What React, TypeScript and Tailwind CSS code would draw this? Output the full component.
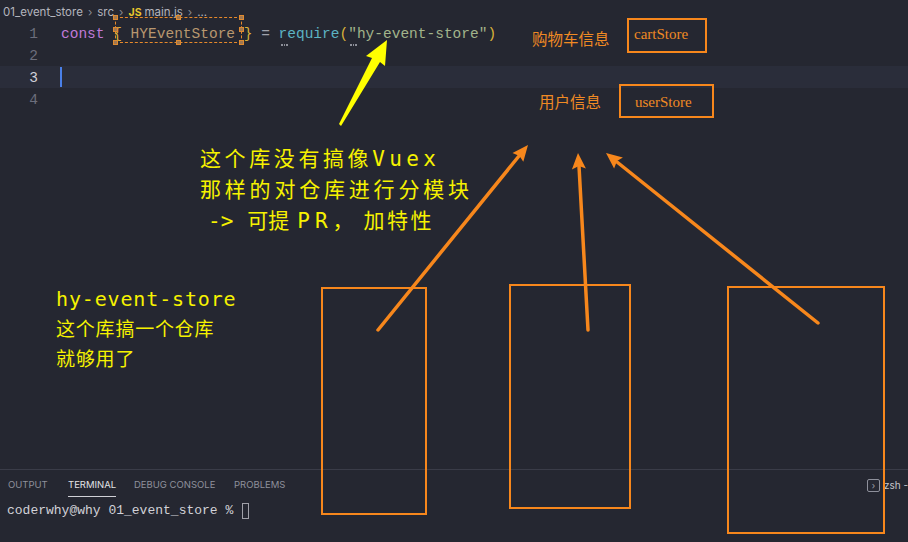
import React from "react";

const mono = { fontFamily: '"Liberation Mono", "DejaVu Sans Mono", monospace' };
const hand = { fontFamily: '"DejaVu Sans Mono", "Noto Sans CJK SC", monospace' };
const cjk = { fontFamily: '"Noto Sans CJK SC", "Noto Sans", sans-serif' };
const serif = { fontFamily: '"Liberation Serif", "Noto Sans CJK SC", serif' };
const sans = { fontFamily: 'Inter, "Noto Sans", sans-serif' };

function Handle({ className }: { className: string }) {
  return <div className={"absolute w-[5px] h-[5px] bg-[#a07850] border border-[#e08a30] " + className} />;
}

function Dots({ className }: { className: string }) {
  return (
    <div className={"absolute flex gap-[1px] " + className}>
      <div className="w-[1.5px] h-[1.5px] bg-[#8d8f99]" />
      <div className="w-[1.5px] h-[1.5px] bg-[#8d8f99]" />
      <div className="w-[1.5px] h-[1.5px] bg-[#8d8f99]" />
    </div>
  );
}

function Overlay() {
  const o = "#f7871c";
  return (
    <svg className="absolute inset-0 pointer-events-none" width={908} height={542} viewBox="0 0 908 542">
      {/* yellow arrow */}
      <polygon points="387,40 385,66 380,62 341,126 339,124 372,58 366,56" fill="#ffff00" />
      {/* rectangles */}
      <rect x={322} y={288} width={104} height={226} fill="none" stroke={o} strokeWidth={2} />
      <rect x={510} y={285} width={120} height={223} fill="none" stroke={o} strokeWidth={2} />
      <rect x={728} y={287} width={156} height={246} fill="none" stroke={o} strokeWidth={2} />
      {/* arrow A */}
      <line x1={378} y1={330} x2={519} y2={156} stroke={o} strokeWidth={3.5} strokeLinecap="round" />
      <polygon points="528,145 523.3,161.8 519.5,156 512.5,153" fill={o} />
      {/* arrow B */}
      <line x1={588} y1={330} x2={579} y2={166} stroke={o} strokeWidth={3.5} strokeLinecap="round" />
      <polygon points="578,153 585.9,168.6 578.9,166 571.9,169.4" fill={o} />
      {/* arrow C */}
      <line x1={818} y1={323} x2={617} y2={162} stroke={o} strokeWidth={3.5} strokeLinecap="round" />
      <polygon points="606,153 622.9,157.5 617,161 614.1,168.5" fill={o} />
    </svg>
  );
}

export default function App() {
  const lines = [1, 2, 3, 4];
  return (
    <div className="relative w-[908px] h-[542px] overflow-hidden bg-[#252731] flex flex-col">
      {/* breadcrumb */}
      <div className="h-[22px] flex items-center gap-[5px] pl-[3px] pt-[4px] text-[11.5px] text-[#b4b5bd]" style={sans}>
        <span>01_event_store</span>
        <span className="text-[#8a8b94]">›</span>
        <span>src</span>
        <span className="text-[#8a8b94]">›</span>
        <span className="text-[#e8c62c] font-bold text-[10.5px]">JS</span>
        <span className="-ml-[2px]">main.js</span>
        <span className="text-[#8a8b94]">›</span>
        <span>...</span>
      </div>

      {/* editor */}
      <div className="flex flex-col" style={mono}>
        {lines.map((n) => (
          <div key={n} className={"h-[22px] flex items-center pt-[3px] relative " + (n === 3 ? "bg-[#2a2d3a]" : "")}>
            <div className={"w-[38px] text-right text-[14.5px] " + (n === 3 ? "text-[#d0d0d8]" : "text-[#6c6e7c]")}>{n}</div>
            <div className="pl-[23px] text-[14.5px] whitespace-pre">
              {n === 1 && (
                <>
                  <span className="text-[#c07ad8]">const</span>
                  <span> </span>
                  <span className="text-[#d9b23a]">{"{"}</span>
                  <span className="text-[#b8976f]"> HYEventStore </span>
                  <span className="text-[#d9b23a]">{"}"}</span>
                  <span className="text-[#a0a2ac]"> = </span>
                  <span className="text-[#5cb3c2]">require</span>
                  <span className="text-[#d9b23a]">(</span>
                  <span className="text-[#a2b48b]">"hy-event-store"</span>
                  <span className="text-[#d9b23a]">)</span>
                </>
              )}
            </div>
            {n === 3 && <div className="absolute left-[60px] top-[1px] w-[2px] h-[20px] bg-[#4a80e8]" />}
          </div>
        ))}
      </div>

      {/* hint dots */}
      <Dots className="left-[281px] top-[44px]" />
      <Dots className="left-[350px] top-[44px]" />

      {/* selection box */}
      <div className="absolute left-[115px] top-[17px] w-[127px] h-[26px] border-[1.5px] border-dashed border-[#e8892a]">
        <Handle className="-left-[3px] -top-[3px]" />
        <Handle className="left-[60px] -top-[3px]" />
        <Handle className="-right-[3px] -top-[3px]" />
        <Handle className="-left-[3px] top-[9px]" />
        <Handle className="-right-[3px] top-[9px]" />
        <Handle className="-left-[3px] -bottom-[3px]" />
        <Handle className="left-[60px] -bottom-[3px]" />
        <Handle className="-right-[3px] -bottom-[3px]" />
      </div>

      {/* store labels */}
      <div className="absolute left-[532px] top-[27px] text-[15.5px] text-[#f08a24] leading-[22px]" style={cjk}>购物车信息</div>
      <div className="absolute left-[627px] top-[18px] w-[80px] h-[35px] border-2 border-[#f7871c] pl-[5px] pt-[4px] text-[15px] text-[#f08a24] leading-[20px]" style={serif}>cartStore</div>
      <div className="absolute left-[539px] top-[90px] text-[15.5px] text-[#f08a24] leading-[22px]" style={cjk}>用户信息</div>
      <div className="absolute left-[619px] top-[84px] w-[95px] h-[34px] border-2 border-[#f7871c] pl-[14px] pt-[6px] text-[15px] text-[#f08a24] leading-[20px]" style={serif}>userStore</div>

      {/* yellow notes */}
      <div className="absolute left-[200px] top-[144px] text-[21px] leading-[31px] text-[#f6f200] whitespace-pre" style={hand}>
        <div>
          <span className="tracking-[3.6px]">这个库没有搞像</span>
          <span className="tracking-[4.4px]">Vuex</span>
        </div>
        <div className="tracking-[3.8px]">那样的对仓库进行分模块</div>
        <div className="pl-[8px]">
          <span>-&gt;</span>
          <span className="ml-[14px]">可提</span>
          <span className="ml-[8px] tracking-[5px]">PR</span>
          <span>，</span>
          <span className="ml-[10px] tracking-[2.5px]">加特性</span>
        </div>
      </div>
      <div className="absolute left-[56px] top-[284px] leading-[30px] text-[#f6f200] whitespace-pre" style={hand}>
        <div className="text-[20px] tracking-[0.85px]">hy-event-store</div>
        <div className="text-[19px] tracking-[0.8px]">这个库搞一个仓库</div>
        <div className="text-[19px] tracking-[0.8px]">就够用了</div>
      </div>

      <div className="flex-1" />

      {/* panel */}
      <div className="h-[73px] border-t border-[#3a3c48] flex flex-col">
        <div className="h-[30px] flex items-center pl-[8px] text-[9.5px] text-[#8e909b] relative" style={sans}>
          <span className="w-[60px]">OUTPUT</span>
          <span className="w-[66px] text-[#e2e2e6] relative">
            TERMINAL
            <span className="absolute left-0 top-[18px] w-[48px] h-[1px] bg-[#d0d0d6]" />
          </span>
          <span className="w-[100px]">DEBUG CONSOLE</span>
          <span>PROBLEMS</span>
          <div className="flex-1" />
          <div className="w-[13px] h-[13px] border border-[#8e909b] rounded-[2px] flex items-center justify-center text-[#a0a2ac] text-[9px] leading-none mr-[4px]">›</div>
          <span className="text-[#c4c6cc] text-[10px] whitespace-nowrap w-[24px] overflow-hidden">zsh - 0</span>
        </div>
        <div className="h-[22px] flex items-center pl-[7px] text-[13px] text-[#d2d2d8] whitespace-pre" style={mono}>
          <span>coderwhy@why 01_event_store % </span>
          <span className="ml-[1px] w-[7px] h-[16px] border border-[#a0a0a8]" />
        </div>
      </div>

      <Overlay />
    </div>
  );
}
